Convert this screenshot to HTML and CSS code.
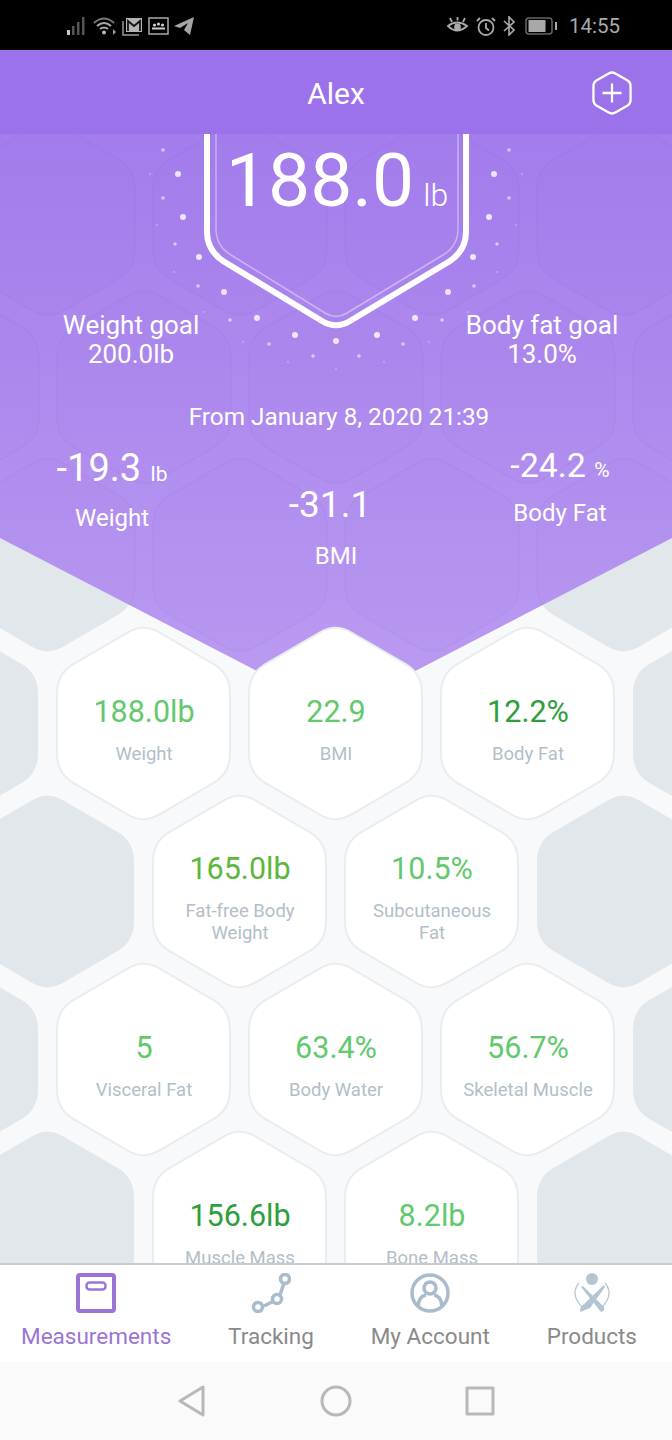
FILE: index.html
```html
<!DOCTYPE html>
<html lang="en">
<head>
  <meta charset="UTF-8" />
  <meta name="viewport" content="width=device-width, initial-scale=1.0" />
  <title>Measurements</title>
  <link rel="stylesheet" href="styles.css">
</head>
<body>

  <!-- shared rounded hexagon, centred on 0,0 -->
  <svg class="defs" width="0" height="0">
    <symbol id="hex" viewBox="-88 -98 176 196">
      <path d="M-16 -91.5 Q0 -101 16 -91.5 L71 -59.5 Q87 -50 87 -30 V30 Q87 50 71 59.5 L16 91.5 Q0 101 -16 91.5 L-71 59.5 Q-87 50 -87 30 V-30 Q-87 -50 -71 -59.5 Z" />
    </symbol>
  </svg>

  <div id="statusBar" class="status-bar">
    <div class="status-group">
      <svg class="status-icon" width="20" height="18" viewBox="0 0 20 18">
        <rect x="0" y="13" width="3" height="5" fill="#c8c8c8" />
        <rect x="5" y="9" width="2.5" height="9" fill="#555" />
        <rect x="10" y="5" width="2.5" height="13" fill="#555" />
        <rect x="15" y="0" width="2.5" height="18" fill="#555" />
      </svg>
      <svg class="status-icon wifi" width="24" height="20" viewBox="0 0 24 20" fill="none" stroke="#aaa">
        <path d="M1 7 Q11 -2 21 7" stroke-width="2" stroke="#777" />
        <path d="M4 10 Q11 4 18 10" stroke-width="2" />
        <path d="M7 13 Q11 10 15 13" stroke-width="2" />
        <circle cx="11" cy="16.5" r="2" fill="#bbb" stroke="none" />
        <path d="M20 13 V19 L23 16 Z" fill="#999" stroke="none" />
      </svg>
      <svg class="status-icon mail" width="21" height="19" viewBox="0 0 21 19">
        <path d="M1 4 V18 H17" fill="none" stroke="#999" stroke-width="1.5" />
        <rect x="4" y="1" width="16" height="14" fill="#b5b5b5" />
        <path d="M6 14 V4 L12 9 L18 4 V14" fill="none" stroke="#111" stroke-width="1.8" />
      </svg>
      <svg class="status-icon photo" width="21" height="18" viewBox="0 0 21 18">
        <rect x="1" y="1" width="19" height="16" fill="none" stroke="#aaa" stroke-width="1.5" />
        <circle cx="6.5" cy="8" r="1.6" fill="#ccc" />
        <circle cx="10.5" cy="7" r="1.6" fill="#ccc" />
        <circle cx="14.5" cy="8" r="1.6" fill="#ccc" />
        <rect x="4" y="10.5" width="13" height="2" fill="#ccc" />
      </svg>
      <svg class="status-icon" width="20" height="18" viewBox="0 0 20 18">
        <path d="M0 9 L20 0 L16 18 L10 13 L14 6 L6 11 Z" fill="#a5a5a5" />
      </svg>
    </div>
    <div class="status-group right">
      <svg class="status-icon" width="21" height="19" viewBox="0 0 21 19" fill="none" stroke="#aaa" stroke-width="1.8">
        <path d="M1 9 Q10 2 20 9 Q10 18 1 9 Z" />
        <circle cx="10.5" cy="10" r="3.4" fill="#aaa" stroke="none" />
        <path d="M3 1 L5 5 M18 1 L16 5 M10.500 0 V3.500" />
      </svg>
      <svg class="status-icon alarm" width="20" height="19" viewBox="0 0 20 19" fill="none" stroke="#aaa" stroke-width="1.8">
        <circle cx="10" cy="10.5" r="7.5" />
        <path d="M10 6 V11 L13 13.5" />
        <path d="M1 4 L4 1 M19 4 L16 1" />
      </svg>
      <svg class="status-icon bluetooth" width="12" height="20" viewBox="0 0 12 20" fill="none" stroke="#aaa" stroke-width="1.6">
        <path d="M1 5 L11 14 L6 19 V1 L11 6 L1 15" />
      </svg>
      <svg class="status-icon battery" width="32" height="18" viewBox="0 0 32 18">
        <rect x="1" y="1" width="26" height="16" rx="3" fill="none" stroke="#666" stroke-width="1.5" />
        <rect x="3.5" y="3" width="17" height="12" fill="#a8a8a8" />
        <rect x="30" y="5" width="2" height="8" fill="#aaa" />
      </svg>
      <span class="clock">14:55</span>
    </div>
  </div>

  <header class="top-bar">
    <span class="top-title">Alex</span>
    <svg class="add-btn" width="40" height="44" viewBox="0 0 42 46" fill="none" stroke="#fff" stroke-width="2.4">
      <path d="M17.5 2.5 Q21 0.5 24.500 2.500 L37 9.700 Q40.500 11.700 40.500 15.700 V30.300 Q40.500 34.300 37 36.300 L24.500 43.500 Q21 45.500 17.500 43.500 L5 36.300 Q1.500 34.300 1.500 30.300 V15.700 Q1.500 11.700 5 9.700 Z" />
      <path d="M21 13 V33 M11 23 H31" />
    </svg>
  </header>

  <main class="content">
    <section class="hero">
      <svg class="hero-hexes" width="672" height="578">
        <use href="#hex" x="-136" y="155" width="176" height="196" />
        <use href="#hex" x="56" y="155" width="176" height="196" />
        <use href="#hex" x="248" y="155" width="176" height="196" />
        <use href="#hex" x="440" y="155" width="176" height="196" />
        <use href="#hex" x="632" y="155" width="176" height="196" />
        <use href="#hex" x="-40" y="-13" width="176" height="196" />
        <use href="#hex" x="152" y="-13" width="176" height="196" />
        <use href="#hex" x="344" y="-13" width="176" height="196" />
        <use href="#hex" x="536" y="-13" width="176" height="196" />
        <use href="#hex" x="-40" y="323" width="176" height="196" />
        <use href="#hex" x="152" y="323" width="176" height="196" />
        <use href="#hex" x="344" y="323" width="176" height="196" />
        <use href="#hex" x="536" y="323" width="176" height="196" />
      </svg>

      <!-- scale outline and the dots fanning out around it -->
      <svg class="scale-art" width="672" height="250" fill="none">
        <path d="M216 0 V95 Q216 112 231 121 L325 179 Q336 186 347 179 L443 121 Q458 112 458 95 V0" stroke="#fff" stroke-opacity="0.4" stroke-width="1.500" />
        <path d="M207 0 V98 Q207 116 223 127 L322 187 Q336 195.500 350 187 L450 127 Q466 116 466 98 V0" stroke="#fff" stroke-width="6" />
        <g class="dots-big">
          <circle cx="178" cy="40" r="3" /><circle cx="183" cy="83" r="3" /><circle cx="199" cy="123" r="3" />
          <circle cx="224" cy="158" r="3" /><circle cx="257" cy="184" r="3" /><circle cx="295" cy="201" r="3" />
          <circle cx="336" cy="207" r="3" /><circle cx="377" cy="201" r="3" /><circle cx="415" cy="184" r="3" />
          <circle cx="448" cy="158" r="3" /><circle cx="473" cy="123" r="3" /><circle cx="489" cy="83" r="3" />
          <circle cx="494" cy="40" r="3" />
        </g>
        <g class="dots-small">
          <circle cx="163" cy="16" r="1.800" /><circle cx="163" cy="64" r="1.800" /><circle cx="175" cy="110" r="1.800" />
          <circle cx="198" cy="152" r="1.800" /><circle cx="230" cy="186" r="1.800" /><circle cx="269" cy="210" r="1.800" />
          <circle cx="313" cy="222" r="1.800" /><circle cx="359" cy="222" r="1.800" /><circle cx="403" cy="210" r="1.800" />
          <circle cx="442" cy="186" r="1.800" /><circle cx="474" cy="152" r="1.800" /><circle cx="497" cy="110" r="1.800" />
          <circle cx="509" cy="64" r="1.800" /><circle cx="509" cy="16" r="1.800" />
        </g>
        <g class="dots-tiny">
          <circle cx="150" cy="40" r="1" /><circle cx="157" cy="91" r="1" /><circle cx="174" cy="138" r="1" />
          <circle cx="204" cy="178" r="1" /><circle cx="243" cy="208" r="1" /><circle cx="288" cy="228" r="1" />
          <circle cx="336" cy="235" r="1" /><circle cx="384" cy="228" r="1" /><circle cx="429" cy="208" r="1" />
          <circle cx="468" cy="178" r="1" /><circle cx="497" cy="138" r="1" /><circle cx="516" cy="91" r="1" />
          <circle cx="522" cy="40" r="1" />
        </g>
      </svg>

      <div class="scale-value">
        <span class="scale-num">188.0</span>
        <span class="scale-unit">lb</span>
      </div>

      <div class="goals">
        <div class="goal">Weight goal<br>200.0lb</div>
        <div class="goal">Body fat goal<br>13.0%</div>
      </div>

      <div class="since">From January 8, 2020 21:39</div>

      <div class="changes">
        <div class="change change-weight">
          <div class="change-num">-19.3 <small>lb</small></div>
          <div class="change-label">Weight</div>
        </div>
        <div class="change change-bmi">
          <div class="change-num">-31.1</div>
          <div class="change-label">BMI</div>
        </div>
        <div class="change change-fat">
          <div class="change-num">-24.2 <small>%</small></div>
          <div class="change-label">Body Fat</div>
        </div>
      </div>
    </section>

    <div class="hex-grid">
      <div class="hex-row row-back">
        <div class="hex blank"><svg class="hex-bg"><use href="#hex" /></svg></div>
        <div class="hex spacer"></div>
        <div class="hex spacer"></div>
        <div class="hex blank"><svg class="hex-bg"><use href="#hex" /></svg></div>
      </div>

      <div class="hex-row">
        <div class="hex blank"><svg class="hex-bg"><use href="#hex" /></svg></div>
        <div class="hex">
          <svg class="hex-bg"><use href="#hex" /></svg>
          <div class="stat-val light">188.0lb</div>
          <div class="stat-label">Weight</div>
        </div>
        <div class="hex">
          <svg class="hex-bg"><use href="#hex" /></svg>
          <div class="stat-val light">22.9</div>
          <div class="stat-label">BMI</div>
        </div>
        <div class="hex">
          <svg class="hex-bg"><use href="#hex" /></svg>
          <div class="stat-val dark">12.2%</div>
          <div class="stat-label">Body Fat</div>
        </div>
        <div class="hex blank"><svg class="hex-bg"><use href="#hex" /></svg></div>
      </div>

      <div class="hex-row">
        <div class="hex blank"><svg class="hex-bg"><use href="#hex" /></svg></div>
        <div class="hex">
          <svg class="hex-bg"><use href="#hex" /></svg>
          <div class="stat-val lime">165.0lb</div>
          <div class="stat-label">Fat-free Body<br>Weight</div>
        </div>
        <div class="hex">
          <svg class="hex-bg"><use href="#hex" /></svg>
          <div class="stat-val light">10.5%</div>
          <div class="stat-label">Subcutaneous<br>Fat</div>
        </div>
        <div class="hex blank"><svg class="hex-bg"><use href="#hex" /></svg></div>
      </div>

      <div class="hex-row">
        <div class="hex blank"><svg class="hex-bg"><use href="#hex" /></svg></div>
        <div class="hex">
          <svg class="hex-bg"><use href="#hex" /></svg>
          <div class="stat-val light">5</div>
          <div class="stat-label">Visceral Fat</div>
        </div>
        <div class="hex">
          <svg class="hex-bg"><use href="#hex" /></svg>
          <div class="stat-val light">63.4%</div>
          <div class="stat-label">Body Water</div>
        </div>
        <div class="hex">
          <svg class="hex-bg"><use href="#hex" /></svg>
          <div class="stat-val light">56.7%</div>
          <div class="stat-label">Skeletal Muscle</div>
        </div>
        <div class="hex blank"><svg class="hex-bg"><use href="#hex" /></svg></div>
      </div>

      <div class="hex-row">
        <div class="hex blank"><svg class="hex-bg"><use href="#hex" /></svg></div>
        <div class="hex">
          <svg class="hex-bg"><use href="#hex" /></svg>
          <div class="stat-val dark">156.6lb</div>
          <div class="stat-label">Muscle Mass</div>
        </div>
        <div class="hex">
          <svg class="hex-bg"><use href="#hex" /></svg>
          <div class="stat-val light">8.2lb</div>
          <div class="stat-label">Bone Mass</div>
        </div>
        <div class="hex blank"><svg class="hex-bg"><use href="#hex" /></svg></div>
      </div>
    </div>
  </main>

  <nav class="tabs">
    <div class="tab active">
      <svg class="tab-icon" width="40" height="40" viewBox="0 0 40 40" fill="none" stroke="#9a75d6">
        <rect x="2" y="2" width="36" height="36" rx="2" stroke-width="4" />
        <rect x="10.500" y="9.500" width="19" height="7" rx="3" stroke-width="2.500" />
      </svg>
      <span>Measurements</span>
    </div>
    <div class="tab">
      <svg class="tab-icon" width="40" height="40" viewBox="0 0 40 40" fill="none" stroke="#a9bccd" stroke-width="3.500">
        <path d="M33 10 L29 22 M23 28 L13 33" />
        <circle cx="34" cy="6" r="4.500" />
        <circle cx="26" cy="26" r="4.500" />
        <circle cx="7" cy="34" r="4.500" />
      </svg>
      <span>Tracking</span>
    </div>
    <div class="tab">
      <svg class="tab-icon" width="40" height="40" viewBox="0 0 40 40" fill="none" stroke="#a9bccd" stroke-width="3.500">
        <circle cx="20" cy="20" r="18" />
        <circle cx="20" cy="15" r="6" />
        <path d="M8 33 Q9 23 16 22 M32 33 Q31 23 24 22" />
      </svg>
      <span>My Account</span>
    </div>
    <div class="tab">
      <svg class="tab-icon" width="40" height="40" viewBox="0 0 40 40" fill="#b4c4d3">
        <circle cx="20" cy="6" r="6" />
        <path d="M9 14 L11 13 L32 34 Q33 38 29 39 Z" />
        <path d="M32 12 L33 14 L18 35 L8 39 Q8 34 11 32 Z" />
        <path d="M7 10 Q-3 22 12 36 M33 10 Q43 22 28 36" fill="none" stroke="#b4c4d3" stroke-width="1.200" />
      </svg>
      <span>Products</span>
    </div>
  </nav>

  <div class="nav-bar">
    <svg class="nav-back" width="28" height="32" viewBox="0 0 28 32" fill="none" stroke="#b8b8b8" stroke-width="3" stroke-linejoin="round">
      <path d="M25 2 V30 L2 16 Z" />
    </svg>
    <svg width="32" height="32" viewBox="0 0 32 32" fill="none" stroke="#b8b8b8" stroke-width="3">
      <circle cx="16" cy="16" r="14" />
    </svg>
    <svg width="30" height="30" viewBox="0 0 30 30" fill="none" stroke="#b8b8b8" stroke-width="3" stroke-linejoin="round">
      <rect x="2" y="2" width="26" height="26" />
    </svg>
  </div>

</body>
</html>
```

FILE: styles.css
```css
body {
  font-family: Roboto, "Liberation Sans", sans-serif;
  margin: 0;
  padding: 0;
  width: 672px;
  height: 1440px;
  display: flex;
  flex-direction: column;
  overflow: hidden;
  background-color: #f7f9fb;
}
.defs {
  position: absolute;
}

/* phone status bar */
.status-bar {
  flex: 0 0 50px;
  box-sizing: border-box;
  background-color: #000;
  display: flex;
  justify-content: space-between;
  align-items: center;
  padding: 2px 52px 0 67px;
}
.status-group {
  display: flex;
  align-items: center;
  gap: 5px;
}
.status-group.right {
  gap: 8px;
}
.status-icon.wifi {
  margin-left: 1px;
}
.status-icon.alarm {
  margin-right: -1px;
}
.status-icon.bluetooth {
  margin-right: 2px;
}
.status-icon.battery {
  margin-right: 4px;
}
.clock {
  color: #aaa;
  font-size: 20.5px;
}

.top-bar {
  flex: 0 0 84px;
  box-sizing: border-box;
  padding-top: 3px;
  background-color: #9b72ea;
  display: flex;
  justify-content: center;
  align-items: center;
  position: relative;
}
.top-title {
  color: #fff;
  font-size: 30px;
}
.add-btn {
  position: absolute;
  left: 592px;
  top: 21px;
}

.content {
  flex: 1;
  position: relative;
  overflow: hidden;
}

/* purple block at the top, cut into a wide V */
.hero {
  position: absolute;
  left: 0;
  top: 0;
  width: 672px;
  height: 578px;
  z-index: 1;
  color: #fff;
  background: linear-gradient(#a37dec, #bb9cf1);
  clip-path: polygon(0 0, 100% 0, 100% 404px, 50% 578px, 0 404px);
}
.hero-hexes {
  position: absolute;
  left: 0;
  top: 0;
  fill: rgba(110, 80, 200, 0.015);
  stroke: rgba(110, 80, 200, 0.06);
  stroke-width: 1.5;
}
.scale-art {
  position: absolute;
  left: 0;
  top: 0;
}
.dots-big {
  fill: rgba(255, 255, 255, 0.8);
}
.dots-small {
  fill: rgba(255, 255, 255, 0.55);
}
.dots-tiny {
  fill: rgba(255, 255, 255, 0.3);
}
.scale-value {
  position: relative;
  display: flex;
  justify-content: center;
  align-items: baseline;
  gap: 9px;
  height: 177px;
  padding: 2px 0 0 2px;
  box-sizing: border-box;
}
.scale-num {
  font-size: 75px;
  line-height: 88px;
}
.scale-unit {
  font-size: 32px;
  font-weight: 300;
}
.goals {
  position: relative;
  display: flex;
  justify-content: space-between;
  padding: 0 30px 0 31px;
}
.goal {
  width: 200px;
  text-align: center;
  font-size: 26px;
  line-height: 29px;
}
.since {
  position: relative;
  text-align: center;
  font-size: 24.3px;
  line-height: 30px;
  margin-top: 32.5px;
  padding-left: 6px;
}
.changes {
  position: relative;
  display: grid;
  grid-template-columns: 224px 224px 224px;
}
.change {
  text-align: center;
}
.change-weight {
  margin-top: 14px;
}
.change-bmi {
  margin-top: 51px;
}
.change-fat {
  margin-top: 11px;
}
.change-num {
  font-size: 38px;
  line-height: 44px;
}
.change-bmi .change-num {
  font-size: 37px;
  padding-right: 12px;
}
.change-fat .change-num {
  font-size: 34px;
}
.change-num small {
  font-size: 21px;
  line-height: 1;
}
.change-label {
  font-size: 24px;
  line-height: 30px;
  margin-top: 13px;
}
.change-bmi .change-label {
  margin-top: 14px;
}
.change-fat .change-label {
  margin-top: 11px;
}

/* honeycomb of results */
.hex-grid {
  padding-top: 325px;
}
.hex-row {
  display: flex;
  justify-content: center;
  gap: 19px;
  margin-bottom: -25px;
  position: relative;
  z-index: 2;
}
.hex-row.row-back {
  z-index: 0;
}
.hex {
  flex: 0 0 173px;
  height: 193px;
  box-sizing: border-box;
  padding-top: 12px;
  position: relative;
  display: flex;
  flex-direction: column;
  align-items: center;
  justify-content: center;
  text-align: center;
}
.hex.spacer {
  visibility: hidden;
}
.hex-bg {
  position: absolute;
  left: -1.5px;
  top: -1px;
  width: 175px;
  height: 195px;
  fill: #fff;
  stroke: #e9edf0;
  stroke-width: 2;
}
.hex.blank .hex-bg {
  fill: #e2e7eb;
  stroke: none;
}
.stat-val {
  position: relative;
  font-size: 30.5px;
  line-height: 34px;
}
.stat-val.light {
  color: #62c96d;
}
.stat-val.dark {
  color: #2f9e3c;
}
.stat-val.lime {
  color: #5cb83a;
}
.stat-label {
  position: relative;
  color: #b3bec8;
  font-size: 18.5px;
  line-height: 22px;
  margin-top: 14px;
}

/* bottom tabs */
.tabs {
  flex: 0 0 99px;
  box-sizing: border-box;
  background-color: #fff;
  border-top: 2px solid #c9cccf;
  position: relative;
  z-index: 3;
  display: flex;
  justify-content: space-between;
  padding: 8px 35px 0 21px;
}
.tab {
  display: flex;
  flex-direction: column;
  align-items: center;
  color: #8a8a8a;
  font-size: 22.5px;
}
.tab.active {
  color: #9a75d6;
}
.tab span {
  margin-top: 10px;
}

.nav-bar {
  flex: 0 0 78px;
  box-sizing: border-box;
  padding-left: 1px;
  background-color: #fafafa;
  display: flex;
  justify-content: center;
  align-items: center;
  gap: 113px;
}
.nav-back {
  margin-right: 1px;
}
```
